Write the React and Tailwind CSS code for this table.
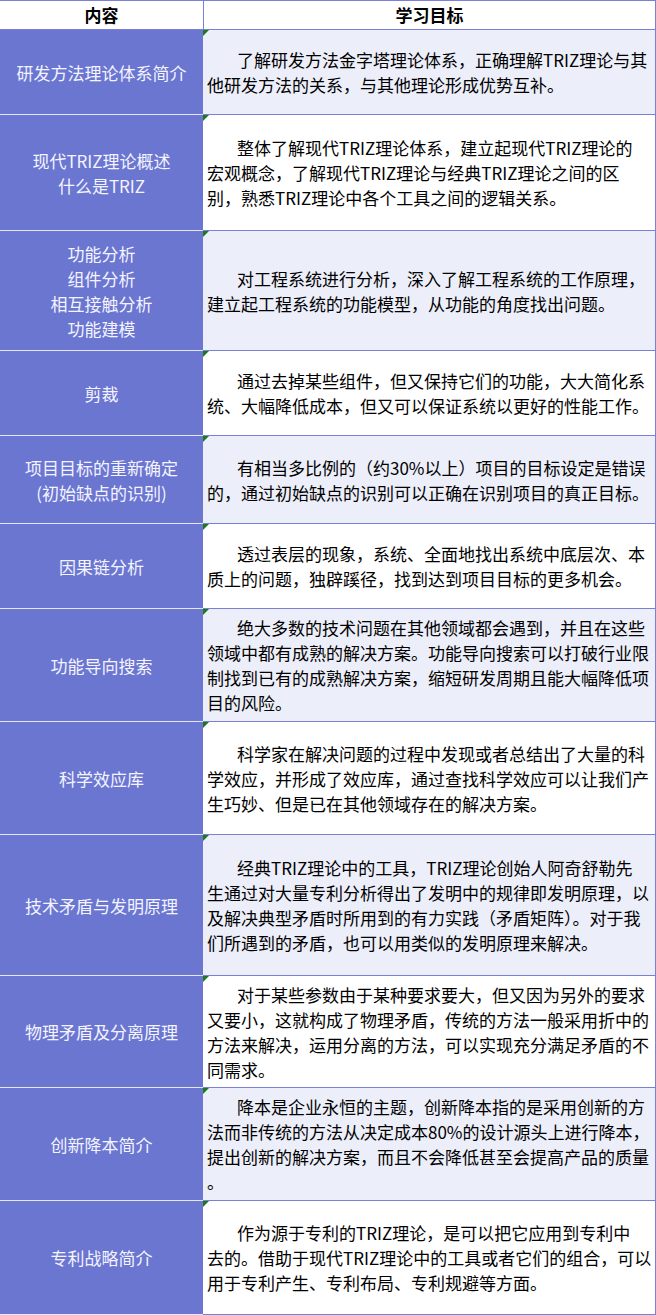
const rows = [
  {
    h: 'h-[85px]',
    bg: 'bg-[#eceef9]',
    title: ['研发方法理论体系简介'],
    lines: ['了解研发方法金字塔理论体系，正确理解TRIZ理论与其', '他研发方法的关系，与其他理论形成优势互补。'],
  },
  {
    h: 'h-[116px]',
    bg: 'bg-white',
    title: ['现代TRIZ理论概述', '什么是TRIZ'],
    lines: [
      '整体了解现代TRIZ理论体系，建立起现代TRIZ理论的',
      '宏观概念，了解现代TRIZ理论与经典TRIZ理论之间的区',
      '别，熟悉TRIZ理论中各个工具之间的逻辑关系。',
    ],
  },
  {
    h: 'h-[120px]',
    bg: 'bg-[#eceef9]',
    title: ['功能分析', '组件分析', '相互接触分析', '功能建模'],
    lines: ['对工程系统进行分析，深入了解工程系统的工作原理，', '建立起工程系统的功能模型，从功能的角度找出问题。'],
  },
  {
    h: 'h-[85px]',
    bg: 'bg-white',
    title: ['剪裁'],
    lines: ['通过去掉某些组件，但又保持它们的功能，大大简化系', '统、大幅降低成本，但又可以保证系统以更好的性能工作。'],
  },
  {
    h: 'h-[88px]',
    bg: 'bg-[#eceef9]',
    title: ['项目目标的重新确定', '(初始缺点的识别)'],
    lines: ['有相当多比例的（约30%以上）项目的目标设定是错误', '的，通过初始缺点的识别可以正确在识别项目的真正目标。'],
  },
  {
    h: 'h-[85px]',
    bg: 'bg-white',
    title: ['因果链分析'],
    lines: ['透过表层的现象，系统、全面地找出系统中底层次、本', '质上的问题，独辟蹊径，找到达到项目目标的更多机会。'],
  },
  {
    h: 'h-[113px]',
    bg: 'bg-[#eceef9]',
    title: ['功能导向搜索'],
    lines: [
      '绝大多数的技术问题在其他领域都会遇到，并且在这些',
      '领域中都有成熟的解决方案。功能导向搜索可以打破行业限',
      '制找到已有的成熟解决方案，缩短研发周期且能大幅降低项',
      '目的风险。',
    ],
  },
  {
    h: 'h-[113px]',
    bg: 'bg-white',
    title: ['科学效应库'],
    lines: [
      '科学家在解决问题的过程中发现或者总结出了大量的科',
      '学效应，并形成了效应库，通过查找科学效应可以让我们产',
      '生巧妙、但是已在其他领域存在的解决方案。',
    ],
  },
  {
    h: 'h-[141px]',
    bg: 'bg-[#eceef9]',
    title: ['技术矛盾与发明原理'],
    lines: [
      '经典TRIZ理论中的工具，TRIZ理论创始人阿奇舒勒先',
      '生通过对大量专利分析得出了发明中的规律即发明原理，以',
      '及解决典型矛盾时所用到的有力实践（矛盾矩阵）。对于我',
      '们所遇到的矛盾，也可以用类似的发明原理来解决。',
    ],
  },
  {
    h: 'h-[112px]',
    bg: 'bg-white',
    title: ['物理矛盾及分离原理'],
    lines: [
      '对于某些参数由于某种要求要大，但又因为另外的要求',
      '又要小，这就构成了物理矛盾，传统的方法一般采用折中的',
      '方法来解决，运用分离的方法，可以实现充分满足矛盾的不',
      '同需求。',
    ],
  },
  {
    h: 'h-[113px]',
    bg: 'bg-[#eceef9]',
    title: ['创新降本简介'],
    lines: [
      '降本是企业永恒的主题，创新降本指的是采用创新的方',
      '法而非传统的方法从决定成本80%的设计源头上进行降本，',
      '提出创新的解决方案，而且不会降低甚至会提高产品的质量',
      '。',
    ],
  },
  {
    h: 'h-[114px]',
    bg: 'bg-white',
    title: ['专利战略简介'],
    lines: [
      '作为源于专利的TRIZ理论，是可以把它应用到专利中',
      '去的。借助于现代TRIZ理论中的工具或者它们的组合，可以',
      '用于专利产生、专利布局、专利规避等方面。',
    ],
  },
]

function Marker() {
  return (
    <svg className="absolute left-0 top-0" width="6" height="6" viewBox="0 0 6 6">
      <polygon points="0,0 6,0 0,6" fill="#1b7a1b" />
    </svg>
  )
}

function App() {
  return (
    <div className="w-[656px] h-[1315px] bg-white text-[17px] text-black font-['Noto_Sans_CJK_SC','Noto_Sans',sans-serif]">
      {/* header */}
      <div className="flex h-[30px] border-t border-b border-[#7a80d8]">
        <div className="w-[203px] flex items-center justify-center font-bold">内容</div>
        <div className="flex-1 flex items-center justify-center font-bold border-l border-r border-[#7a80d8]">学习目标</div>
      </div>

      {rows.map((r, i) => (
        <div key={i} className={`flex ${r.h}`}>
          <div className="w-[203px] bg-[#6b76d1] border-b border-[#e4e7fa] flex flex-col items-center justify-center text-[#f3f4ff] leading-[25px] text-center">
            {r.title.map((t, j) => (
              <div key={j}>{t}</div>
            ))}
          </div>
          <div className={`relative flex-1 ${r.bg} border-b border-r border-[#7a80d8] flex flex-col justify-center pl-[4px] leading-[25px] whitespace-nowrap`}>
            <Marker />
            {r.lines.map((l, j) => (
              <div key={j} className={j === 0 ? 'pl-[30px]' : ''}>{l}</div>
            ))}
          </div>
        </div>
      ))}
    </div>
  )
}

export default App
